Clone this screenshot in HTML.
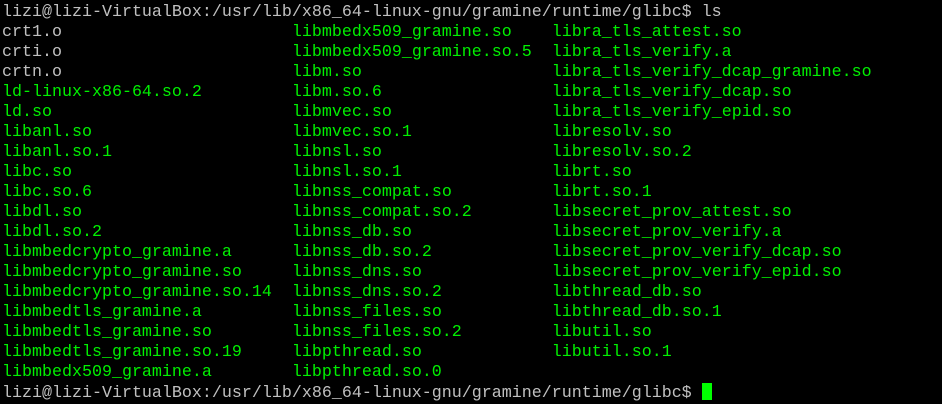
<!DOCTYPE html><html><head><style>
body{margin:0;background:#000;width:942px;height:400px;overflow:hidden}
pre{margin:0;padding:3px 0 0 2px;font-family:"Liberation Mono",monospace;font-size:16.67px;line-height:20px;color:#c0c0c0}
.g{color:#00f000}
.c{display:inline-block;width:10px;height:17px;background:#00ff00;vertical-align:-3px}
</style></head><body><pre>lizi@lizi-VirtualBox:/usr/lib/x86_64-linux-gnu/gramine/runtime/glibc$ ls
crt1.o                       <span class="g">libmbedx509_gramine.so</span>    <span class="g">libra_tls_attest.so</span>
crti.o                       <span class="g">libmbedx509_gramine.so.5</span>  <span class="g">libra_tls_verify.a</span>
crtn.o                       <span class="g">libm.so</span>                   <span class="g">libra_tls_verify_dcap_gramine.so</span>
<span class="g">ld-linux-x86-64.so.2</span>         <span class="g">libm.so.6</span>                 <span class="g">libra_tls_verify_dcap.so</span>
<span class="g">ld.so</span>                        <span class="g">libmvec.so</span>                <span class="g">libra_tls_verify_epid.so</span>
<span class="g">libanl.so</span>                    <span class="g">libmvec.so.1</span>              <span class="g">libresolv.so</span>
<span class="g">libanl.so.1</span>                  <span class="g">libnsl.so</span>                 <span class="g">libresolv.so.2</span>
<span class="g">libc.so</span>                      <span class="g">libnsl.so.1</span>               <span class="g">librt.so</span>
<span class="g">libc.so.6</span>                    <span class="g">libnss_compat.so</span>          <span class="g">librt.so.1</span>
<span class="g">libdl.so</span>                     <span class="g">libnss_compat.so.2</span>        <span class="g">libsecret_prov_attest.so</span>
<span class="g">libdl.so.2</span>                   <span class="g">libnss_db.so</span>              <span class="g">libsecret_prov_verify.a</span>
<span class="g">libmbedcrypto_gramine.a</span>      <span class="g">libnss_db.so.2</span>            <span class="g">libsecret_prov_verify_dcap.so</span>
<span class="g">libmbedcrypto_gramine.so</span>     <span class="g">libnss_dns.so</span>             <span class="g">libsecret_prov_verify_epid.so</span>
<span class="g">libmbedcrypto_gramine.so.14</span>  <span class="g">libnss_dns.so.2</span>           <span class="g">libthread_db.so</span>
<span class="g">libmbedtls_gramine.a</span>         <span class="g">libnss_files.so</span>           <span class="g">libthread_db.so.1</span>
<span class="g">libmbedtls_gramine.so</span>        <span class="g">libnss_files.so.2</span>         <span class="g">libutil.so</span>
<span class="g">libmbedtls_gramine.so.19</span>     <span class="g">libpthread.so</span>             <span class="g">libutil.so.1</span>
<span class="g">libmbedx509_gramine.a</span>        <span class="g">libpthread.so.0</span>
lizi@lizi-VirtualBox:/usr/lib/x86_64-linux-gnu/gramine/runtime/glibc$ <span class="c"></span></pre></body></html>
